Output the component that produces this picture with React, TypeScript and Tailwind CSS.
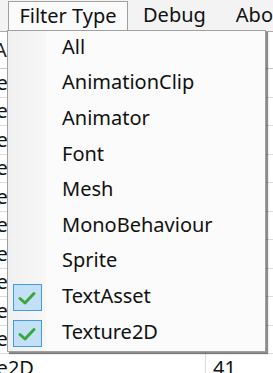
import React from "react";

const items = [
  { label: "All", checked: false },
  { label: "AnimationClip", checked: false },
  { label: "Animator", checked: false },
  { label: "Font", checked: false },
  { label: "Mesh", checked: false },
  { label: "MonoBehaviour", checked: false },
  { label: "Sprite", checked: false },
  { label: "TextAsset", checked: true },
  { label: "Texture2D", checked: true },
];

function Check() {
  return (
    <div className="w-[29px] h-[27px] bg-[#c4e0f7] border border-[#3f9be8] flex items-center justify-center">
      <svg width="20" height="16" viewBox="0 0 20 16">
        <path d="M3 8.5 L8 13 L17 3.5" fill="none" stroke="#38a83a" strokeWidth="3" strokeLinecap="round" strokeLinejoin="round" />
      </svg>
    </div>
  );
}

export default function App() {
  const rows = Array.from({ length: 12 });
  return (
    <div
      className="relative w-[273px] h-[373px] overflow-hidden bg-white text-[#111]"
      style={{ fontFamily: '"Noto Sans", "Open Sans", sans-serif' }}
    >
      {/* menu bar */}
      <div className="h-[32px] bg-[#f3f3f3] border-b border-[#a8a8a8] flex items-stretch text-[20px] leading-none whitespace-nowrap">
        <div className="shrink-0 ml-[8px] mt-[1px] w-[120px] border border-b-0 border-[#a0a0a0] bg-[#fafafa] flex items-center justify-center pb-[2px]">
          Filter Type
        </div>
        <div className="shrink-0 ml-[15px] flex items-center pb-[2px]">Debug</div>
        <div className="shrink-0 ml-[30px] flex items-center pb-[2px]">About</div>
      </div>

      {/* table behind */}
      <div className="text-[20px] leading-none">
        <div className="h-[37px] border-b border-[#c8c8c8] flex items-center overflow-hidden">
          <span className="ml-[-6px] text-[#222]">A</span>
        </div>
        {rows.map((_, i) => (
          <div key={i} className="h-[28.5px] border-b border-[#dcdcdc] flex items-stretch overflow-hidden whitespace-nowrap">
            <span className="ml-[-62px] w-[267px] shrink-0 flex items-center">Texture2D</span>
            <span className="border-l border-[#dcdcdc] pl-[7px] flex items-center w-[68px] shrink-0">41</span>
          </div>
        ))}
      </div>

      {/* dropdown */}
      <div className="absolute left-[7px] top-[30px] w-[259px] border border-[#a0a0a0] bg-[#fbfbfb] shadow-[2px_2px_1px_rgba(0,0,0,0.45)] flex">
        <div className="w-[38px] bg-gradient-to-r from-[#f0f0f0] to-[#f7f7f7] flex flex-col">
          {items.map((it) => (
            <div key={it.label} className="h-[35.6px] flex items-center justify-center">
              {it.checked ? <Check /> : null}
            </div>
          ))}
        </div>
        <div className="flex-1 flex flex-col text-[20px] leading-none">
          {items.map((it) => (
            <div key={it.label} className="h-[35.6px] flex items-center pl-[16px] pb-[4px]">
              {it.label}
            </div>
          ))}
        </div>
      </div>
    </div>
  );
}
